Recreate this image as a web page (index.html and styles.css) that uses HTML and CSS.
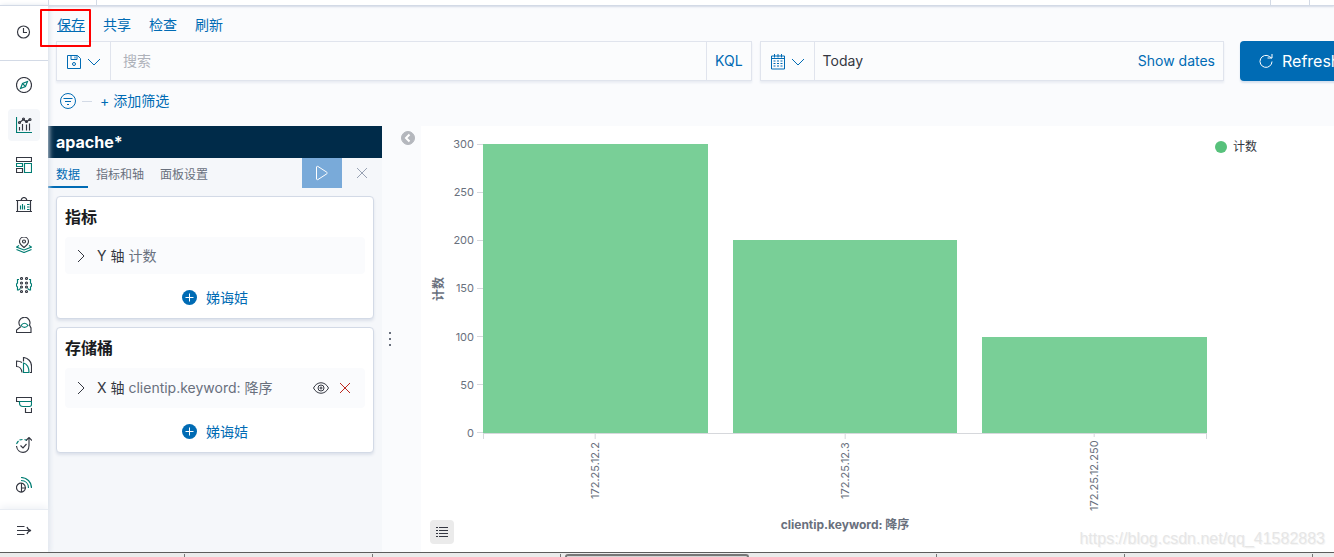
FILE: index.html
```html
<!DOCTYPE html>
<html lang="zh-CN">
<head>
<meta charset="utf-8">
<title>Kibana</title>
<meta name="viewport" content="width=device-width, initial-scale=1">
<link rel="stylesheet" href="styles.css">
</head>
<body>
<header class="topbar"><span class="topbar-cell logo-cell"></span><span class="topbar-cell space-cell"></span><span class="topbar-cell crumbs-cell"></span><span class="topbar-cell help-cell"></span></header>
<div class="app">
  <nav class="rail" aria-label="Kibana">
    <div class="rail-recent">
      <button class="rail-item" aria-label="Recent"><svg class="icon" viewBox="0 0 32 32"><circle cx="15" cy="16" r="12"/><path d="M15 8v9h7"/></svg></button>
    </div>
    <div class="rail-apps">
      <button class="rail-item" aria-label="Discover"><svg class="icon" viewBox="0 0 32 32"><circle cx="16" cy="16" r="15"/><path class="teal" d="M23 9l-4 10-10 4 4-10z"/><path class="teal" d="M13 13l6 6"/></svg></button>
      <button class="rail-item current" aria-label="Visualize"><svg class="icon" viewBox="0 0 32 32"><path class="teal" d="M1 0v31h31"/><path d="M7 27v-7M13 27V14M21 27V15M27 27V13M7 11l8-6 6 5 6-5"/><circle cx="7" cy="11" r="2"/><circle cx="15" cy="4" r="2"/><circle cx="21" cy="9" r="2"/><circle cx="28" cy="5" r="2"/></svg></button>
      <button class="rail-item" aria-label="Dashboard"><svg class="icon" viewBox="0 0 32 32"><path d="M1 1h30v8H1zM1 23h12v8H1z"/><path class="teal" d="M1 13h12v6H1zM17 13h14v18H17z"/></svg></button>
      <button class="rail-item" aria-label="Canvas"><svg class="icon" viewBox="0 0 32 32"><path d="M0 7h32M3 7v22M29 7v22M0 29h32M10 7c1-4 3-6 6-6s5 2 6 6"/><path class="teal" d="M9 17v8M13 14v11M17 17v8M22 15h5M22 20h5M22 25h5"/></svg></button>
      <button class="rail-item" aria-label="Maps"><svg class="icon" viewBox="0 0 32 32"><path d="M16 21c-5-4-9-7-9-12a9 9 0 0 1 18 0c0 5-4 8-9 12z"/><circle cx="16" cy="9" r="3"/><path class="teal" d="M6 17l-5 3 15 6 15-6-5-3M1 25l15 6 15-6"/></svg></button>
      <button class="rail-item" aria-label="Machine learning"><svg class="icon" viewBox="0 0 32 32"><circle cx="11" cy="3" r="2"/><circle cx="21" cy="3" r="2"/><circle cx="11" cy="12" r="2"/><circle cx="21" cy="12" r="2"/><circle cx="11" cy="20" r="2"/><circle cx="21" cy="20" r="2"/><circle cx="11" cy="29" r="2"/><circle cx="21" cy="29" r="2"/><path class="teal" d="M6 5H3v7l-2 2v4l2 2v6h2l4-3M26 5h3v7l2 2v4l-2 2v6h-2l-4-3"/></svg></button>
      <button class="rail-item" aria-label="Metrics"><svg class="icon" viewBox="0 0 32 32"><path d="M8 18a11 11 0 1 1 19-2l3 6v9H1v-5l9-7"/><path class="teal" d="M10 17c4-6 10-6 14 0-4 5-10 5-14 0z"/></svg></button>
      <button class="rail-item" aria-label="Logs"><svg class="icon" viewBox="0 0 32 32"><path d="M12 11C9 9 5 8 1 8v11c6 0 10 4 11 12M15 9V1c9 1 16 8 16 17v13h-3"/><path class="teal" d="M15 12c7 2 11 9 11 19H15z"/></svg></button>
      <button class="rail-item" aria-label="APM"><svg class="icon" viewBox="0 0 32 32"><path d="M7 9H1V1h30v8M19 22v9h12v-9"/><path class="teal" d="M7 9h24v6c0 2-1 4-4 4H14c-4 0-7-3-7-7z"/></svg></button>
      <button class="rail-item" aria-label="Uptime"><svg class="icon" viewBox="0 0 32 32"><path class="teal" d="M1 14c1-2 2-4 4-6M7 6c2-1 4-1 6-1M17 5l5 2"/><path d="M1 18c2 17 25 17 25-1V1M20 7l6-6 6 6M9 17l5 5 7-8"/></svg></button>
      <button class="rail-item" aria-label="SIEM"><svg class="icon" viewBox="0 0 32 32"><path d="M14 13a9 9 0 1 0 5 9h-8M11 13v18M19 22c0-4-2-7-5-9"/><path class="teal" d="M10 7c9 0 15 6 15 15M10 1c12 0 21 9 21 21"/></svg></button>
    </div>
    <div class="rail-expand">
      <button class="rail-item" aria-label="Expand"><svg class="icon" viewBox="0 0 32 32"><path d="M2 7h15M2 15h27M2 23h15M22 8c1 4 4 6 8 7-4 1-7 3-8 7"/></svg></button>
    </div>
  </nav>
  <main class="page">
    <nav class="menu"><span class="save-wrap"><a class="save" href="#">保存</a><span class="callout"></span></span><a href="#">共享</a><a href="#">检查</a><a href="#">刷新</a></nav>
    <div class="querybar">
      <div class="control search">
        <button class="control-btn" aria-label="Saved queries"><svg class="icon" viewBox="0 0 32 32"><path d="M3 3h20l6 6v20H3zM10 3v8h12V3M18 5v4"/><circle cx="16" cy="20" r="3"/></svg><svg class="icon chevron" viewBox="0 0 32 32"><path d="M4 10l12 12 12-12"/></svg></button>
        <input type="text" placeholder="搜索" aria-label="搜索">
        <button class="kql">KQL</button>
      </div>
      <div class="control dates">
        <button class="control-btn" aria-label="Quick select"><svg class="icon" viewBox="0 0 32 32"><path d="M3 4h26v26H3zM3 9h26M9 0v7M16 0v7M23 0v7"/><path d="M7 14h4M14 14h4M21 14h4M7 19h4M14 19h4M21 19h4M7 24h4M14 24h4M21 24h4"/></svg><svg class="icon chevron" viewBox="0 0 32 32"><path d="M4 10l12 12 12-12"/></svg></button>
        <button class="today">Today</button><button class="showdates">Show dates</button>
      </div>
      <button class="refresh"><svg class="icon" viewBox="0 0 32 32"><path d="M28 17a12 12 0 1 1-5-10l4 3M28 2v8h-9"/></svg>Refresh</button>
    </div>
    <div class="filterbar"><button class="filter-menu" aria-label="Filters"><svg class="icon" viewBox="0 0 32 32"><circle cx="16" cy="16" r="15"/><path d="M7 11h18M10 17h12M14 23h4"/></svg></button><span class="dash"></span><button class="add-filter">+ 添加筛选</button></div>
    <div class="workspace">
      <aside class="editor">
        <h1>apache*</h1>
        <div class="tabs">
          <button class="tab selected">数据</button><button class="tab">指标和轴</button><button class="tab">面板设置</button>
          <button class="apply" aria-label="Apply"><svg class="icon" viewBox="0 0 32 32"><path d="M5 4c0-1 1-2 3-1l17 11c2 1 2 3 0 4L8 29c-2 1-3 0-3-1z"/></svg></button>
          <button class="discard" aria-label="Discard"><svg class="icon" viewBox="0 0 32 32"><path d="M6 6l20 20M26 6L6 26"/></svg></button>
        </div>
        <div class="cards">
          <section class="card">
            <h2>指标</h2>
            <div class="agg"><button class="agg-toggle"><svg class="icon" viewBox="0 0 32 32"><path d="M10 4l12 12-12 12"/></svg><span>Y 轴 <em>计数</em></span></button></div>
            <button class="add"><svg class="icon" viewBox="0 0 32 32"><circle class="disc" cx="15" cy="15" r="15"/><path class="plus" d="M15 7v16M7 15h16"/></svg>娣诲姞</button>
          </section>
          <section class="card">
            <h2>存储桶</h2>
            <div class="agg with-tools"><button class="agg-toggle"><svg class="icon" viewBox="0 0 32 32"><path d="M10 4l12 12-12 12"/></svg><span>X 轴 <em>clientip.keyword: 降序</em></span></button><button class="tool" aria-label="Disable"><svg class="icon" viewBox="0 0 32 32"><path d="M1 16C8 2 24 2 31 16 24 30 8 30 1 16z"/><circle cx="16" cy="16" r="6"/><circle cx="16" cy="16" r="2"/></svg></button><button class="tool remove" aria-label="Remove"><svg class="icon" viewBox="0 0 32 32"><path d="M6 6l20 20M26 6L6 26"/></svg></button></div>
            <button class="add"><svg class="icon" viewBox="0 0 32 32"><circle class="disc" cx="15" cy="15" r="15"/><path class="plus" d="M15 7v16M7 15h16"/></svg>娣诲姞</button>
          </section>
        </div>
      </aside>
      <div class="gutter">
        <button class="grip" aria-label="Resize"><i></i><i></i><i></i></button>
        <button class="collapse" aria-label="Collapse"><svg class="icon" viewBox="0 0 32 32"><circle cx="16" cy="16" r="13"/><path d="M19 9l-7 7 7 7"/></svg></button>
      </div>
      <section class="chart">
        <div class="y-title">计数</div>
        <div class="y-axis"><span>300</span><span>250</span><span>200</span><span>150</span><span>100</span><span>50</span><span>0</span></div>
        <div class="plot"><div class="bar" style="height:100%"></div><div class="bar" style="height:66.67%"></div><div class="bar" style="height:33.33%"></div></div>
        <div class="legend"><i></i>计数</div>
        <div class="x-axis"><span>172.25.12.2</span><span>172.25.12.3</span><span>172.25.12.250</span></div>
        <div class="x-title">clientip.keyword: 降序</div>
        <button class="legend-toggle" aria-label="Toggle legend"><svg class="icon" viewBox="0 0 32 32"><path d="M4 7h4M10 7h18M4 13h4M10 13h18M4 19h4M10 19h18M4 25h4M10 25h18"/></svg></button>
        <span class="watermark">https://blog.csdn.net/qq_41582883</span>
      </section>
    </div>
  </main>
</div>
<footer class="taskbar"><span></span><span></span><span></span><span class="active"></span><span></span><span></span><span></span></footer>
</body>
</html>
```
FILE: styles.css
```css
* { box-sizing: border-box; }
body {
  margin: 0;
  height: 100vh;
  display: flex;
  flex-direction: column;
  overflow: hidden;
  font: 14px/20px Inter, "Noto Sans CJK SC", sans-serif;
  color: #343741;
  background: #fafbfd;
}
button, input { font: inherit; color: inherit; border: 0; padding: 0; margin: 0; background: none; }
button { cursor: pointer; }
a { color: #006bb4; text-decoration: none; }
.icon { display: block; flex: none; width: 16px; height: 16px; fill: none; stroke: currentColor; stroke-width: 2; }
.teal { stroke: #017d73; }

.topbar { display: flex; flex: none; height: 6px; background: #fff; border-bottom: 1px solid #d3dae6; box-shadow: 0 1px 2px #d3dae6; z-index: 1; }
.topbar-cell { border-right: 1px solid #d3dae6; }
.logo-cell { width: 49px; }
.space-cell { width: 48px; }
.crumbs-cell { flex: 1; }
.help-cell { width: 39px; margin-right: 24px; }

.app { display: flex; flex: 1; min-height: 0; }
.rail { display: flex; flex-direction: column; flex: none; width: 48px; background: #fff; box-shadow: 1px 0 5px #d3dae6; z-index: 1; }
.rail-recent { padding: 10px 8px 11px; height: 55px; border-bottom: 1px solid #d3dae6; }
.rail-apps { display: flex; flex-direction: column; flex: 1; gap: 8px; padding: 8px; }
.rail-item { display: grid; place-items: center; flex: none; width: 32px; height: 32px; border-radius: 4px; }
.rail-item .icon { stroke-width: 2.3; }
.current { background: #f5f7fa; }
.rail-expand { padding: 5px 8px; height: 43px; border-top: 1px solid #e9edf3; box-shadow: 0 -2px 8px #edf0f5; }

.page { display: flex; flex-direction: column; flex: 1; min-width: 0; }
.menu { display: flex; gap: 18px; padding: 9px 9px 6px; }
.save { text-decoration: underline; }
.save-wrap { position: relative; }
.callout { position: absolute; inset: -6px -6px -12px -17px; border: 2px solid #f00; border-radius: 1px; z-index: 2; pointer-events: none; }
.querybar { display: flex; height: 40px; margin: 0 -22px 0 8px; }
.control { display: flex; background: #fbfcfd; border: 1px solid #e0e4ed; box-shadow: 0 2px 2px #e9ecf3; color: #006bb4; }
.search { flex: 3; min-width: 0; margin-right: 8px; }
.dates { flex: 2; min-width: 0; margin-right: 16px; }
.control-btn { display: flex; align-items: center; gap: 4px; padding: 2px 8px 0 9px; border-right: 1px solid #e0e4ed; }
.search input { flex: 1; min-width: 0; padding: 0 12px; outline: 0; }
.search input::placeholder { color: #aeb2ba; opacity: 1; }
.kql { padding: 0 8px; border-left: 1px solid #e0e4ed; }
.today { flex: 1; padding: 0 8px; text-align: left; color: #343741; }
.showdates { padding: 0 8px; }
.refresh { display: flex; align-items: center; gap: 8px; width: 116px; padding-left: 18px; border-radius: 4px; background: #006bb4; color: #fff; font-size: 16px; box-shadow: 0 2px 2px #d5e0ee; }
.filterbar { display: flex; align-items: center; gap: 6px; height: 45px; padding: 0 12px 5px; color: #006bb4; }
.dash { width: 10px; height: 1px; background: #d3dae6; }
.add-filter { padding-left: 2px; }

.workspace { display: flex; flex: 1; min-height: 0; }
.editor { flex: none; width: 334px; background: #f5f7fa; }
h1 { margin: 0; padding: 4px 8px; background: #002b49; color: #fff; font-size: 16px; line-height: 24px; font-weight: 700; }
.tabs { display: flex; height: 30px; font-size: 12px; color: #69707d; }
.tab { padding: 5px 8px 0; border-bottom: 2px solid transparent; }
.selected { color: #006bb4; border-color: #006bb4; }
.apply { display: grid; place-items: center; width: 40px; margin-left: auto; background: #79aad9; color: #fff; }
.discard { display: grid; place-items: center; width: 40px; color: #98a2b3; }
.cards { display: flex; flex-direction: column; gap: 8px; padding: 8px; }
.card { padding: 8px 8px 10px; background: #fff; border: 1px solid #d3dae6; border-radius: 4px; box-shadow: 0 2px 3px #dce1ea; }
h2 { margin: 0 0 8px; color: #1a1c21; font-size: 16px; line-height: 24px; font-weight: 700; }
.agg { display: flex; align-items: center; height: 37px; padding: 0 8px; background: #fafbfd; border-radius: 4px; }
.with-tools { height: 40px; }
.agg-toggle { display: flex; align-items: center; flex: 1; gap: 8px; text-align: left; }
.agg em { font-style: normal; color: #69707d; }
.tool { width: 24px; display: grid; place-items: center; }
.remove { color: #bd271e; }
.add { display: flex; align-items: center; gap: 8px; margin: 14px auto 0; color: #006bb4; }
.disc { fill: #006bb4; stroke: none; }
.plus { stroke: #fff; }

.gutter { display: flex; justify-content: space-between; flex: none; width: 39px; padding-right: 5px; }
.grip { display: flex; flex-direction: column; align-items: center; justify-content: center; gap: 4px; width: 16px; }
.grip i { width: 2px; height: 2px; background: #69707d; }
.collapse { align-self: flex-start; padding-top: 4px; color: #b4b7bd; }
.collapse circle { fill: currentColor; }
.collapse path { stroke: #fff; stroke-width: 4; }

.chart {
  position: relative;
  display: grid;
  grid-template-columns: 28px 34px 1fr 127px;
  grid-template-rows: 1fr 78px 41px;
  flex: 1;
  min-width: 0;
  padding-top: 18px;
  background: #fff;
  color: #69707d;
  font-size: 12px;
}
.y-title { writing-mode: vertical-rl; text-orientation: sideways; transform: rotate(180deg); text-align: center; line-height: 20px; font-weight: 700; }
.y-axis { display: flex; flex-direction: column; justify-content: space-between; margin: -10px 0; font-size: 11px; }
.y-axis span { display: flex; align-items: center; justify-content: flex-end; gap: 3px; }
.y-axis span::after { content: ""; width: 6px; height: 1px; background: #d6d8dc; }
.plot { display: flex; align-items: flex-end; gap: 25px; box-shadow: 0 1px #d6d8dc; }
.bar { flex: 1; background: #79cf97; }
.legend { display: flex; align-items: center; align-self: start; gap: 6px; margin-top: -7px; padding-left: 8px; color: #343741; }
.legend i { width: 12px; height: 12px; border-radius: 50%; background: #57c17b; }
.x-axis { grid-column: 3; position: relative; display: flex; gap: 25px; font-size: 11px; }
.x-axis::before, .x-axis::after { content: ""; position: absolute; top: 0; left: 0; width: 1px; height: 6px; background: #d6d8dc; }
.x-axis::after { left: auto; right: 0; }
.x-axis span { display: flex; align-items: center; justify-content: flex-end; flex: 1; writing-mode: vertical-rl; transform: rotate(180deg); gap: 3px; }
.x-axis span::after { content: ""; width: 1px; height: 6px; background: #d6d8dc; }
.x-title { grid-column: 3; text-align: center; font-weight: 700; padding-top: 4px; }
.y-title { justify-self: end; }
.legend-toggle { position: absolute; left: 9px; bottom: 8px; display: grid; place-items: center; width: 24px; height: 24px; border-radius: 4px; background: #ebebeb; color: #343741; }
.watermark { position: absolute; right: 9px; bottom: 3px; color: #e6e6e6; font: 16px/20px "Liberation Sans", sans-serif; text-shadow: 1px 1px #f5f5f5; }

.taskbar { display: flex; flex: none; height: 5px; overflow: hidden; background: #ebebeb; border-top: 1px solid #5c5c5c; z-index: 2; }
.taskbar span { flex: none; width: 188px; margin-top: 1px; border-right: 1px solid #777; }
.taskbar span:first-child { width: 185px; }
.taskbar .active { background: #d5d5d5; border: 2px solid #777; border-bottom: 0; border-radius: 3px 3px 0 0; width: 184px; margin-left: 4px; }
```
